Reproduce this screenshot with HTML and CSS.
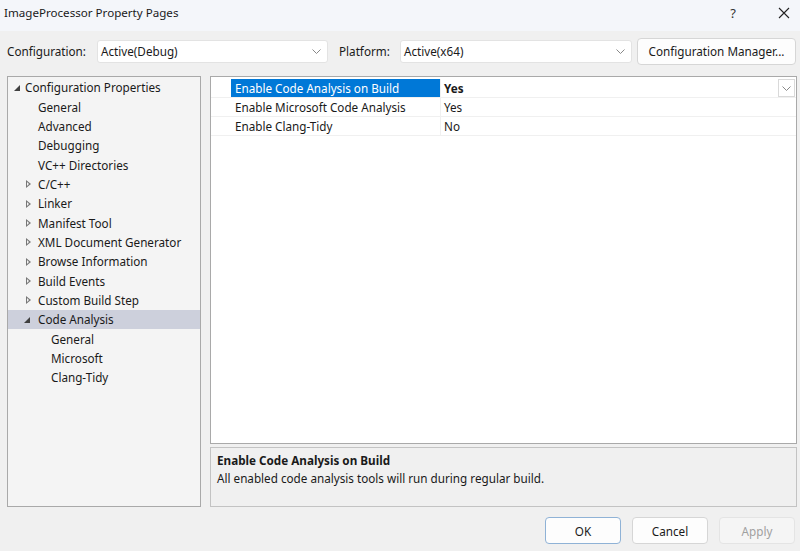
FILE: index.html
```html
<!DOCTYPE html>
<html>
<head>
<meta charset="utf-8">
<link rel="stylesheet" href="styles.css">
</head>
<body>
<div class="window">
  <div class="titlebar">
    <span class="title">ImageProcessor Property Pages</span>
    <div class="tb-controls">
      <span class="tb-help">?</span>
      <svg class="tb-close" width="12" height="12" viewBox="0 0 12 12"><path d="M1 1L11 11M11 1L1 11" stroke="#222" stroke-width="1.1" fill="none"/></svg>
    </div>
  </div>
  <div class="configrow">
    <span class="lbl lbl-config">Configuration:</span>
    <div class="combo combo-config"><span>Active(Debug)</span><svg class="chev" width="9" height="5" viewBox="0 0 9 5"><path d="M0.5 0.5L4.5 4.5L8.5 0.5" stroke="#888" fill="none"/></svg></div>
    <span class="lbl lbl-platform">Platform:</span>
    <div class="combo combo-platform"><span>Active(x64)</span><svg class="chev" width="9" height="5" viewBox="0 0 9 5"><path d="M0.5 0.5L4.5 4.5L8.5 0.5" stroke="#888" fill="none"/></svg></div>
    <div class="btn btn-cfgmgr">Configuration Manager...</div>
  </div>
  <div class="main">
    <div class="tree">
      <div class="node l0"><span class="tri open"></span>Configuration Properties</div>
      <div class="node l1"><span class="tri none"></span>General</div>
      <div class="node l1"><span class="tri none"></span>Advanced</div>
      <div class="node l1"><span class="tri none"></span>Debugging</div>
      <div class="node l1"><span class="tri none"></span>VC++ Directories</div>
      <div class="node l1"><span class="tri closed"></span>C/C++</div>
      <div class="node l1"><span class="tri closed"></span>Linker</div>
      <div class="node l1"><span class="tri closed"></span>Manifest Tool</div>
      <div class="node l1"><span class="tri closed"></span>XML Document Generator</div>
      <div class="node l1"><span class="tri closed"></span>Browse Information</div>
      <div class="node l1"><span class="tri closed"></span>Build Events</div>
      <div class="node l1"><span class="tri closed"></span>Custom Build Step</div>
      <div class="node l1 sel"><span class="tri open"></span>Code Analysis</div>
      <div class="node l2"><span class="tri none"></span>General</div>
      <div class="node l2"><span class="tri none"></span>Microsoft</div>
      <div class="node l2"><span class="tri none"></span>Clang-Tidy</div>
    </div>
    <div class="rightcol">
      <div class="grid">
        <div class="row selrow">
          <div class="gutter"></div>
          <div class="name">Enable Code Analysis on Build</div>
          <div class="value bold">Yes</div>
          <div class="ddbtn"><svg width="9" height="5" viewBox="0 0 9 5"><path d="M0.5 0.5L4.5 4.5L8.5 0.5" stroke="#888" fill="none"/></svg></div>
        </div>
        <div class="row">
          <div class="gutter"></div>
          <div class="name">Enable Microsoft Code Analysis</div>
          <div class="value">Yes</div>
        </div>
        <div class="row">
          <div class="gutter"></div>
          <div class="name">Enable Clang-Tidy</div>
          <div class="value">No</div>
        </div>
      </div>
      <div class="desc">
        <div class="desc-title">Enable Code Analysis on Build</div>
        <div class="desc-text">All enabled code analysis tools will run during regular build.</div>
      </div>
    </div>
  </div>
  <div class="footer">
    <div class="btn fbtn ok">OK</div>
    <div class="btn fbtn">Cancel</div>
    <div class="btn fbtn disabled">Apply</div>
  </div>
</div>
</body>
</html>
```
FILE: styles.css
```css
* { box-sizing: border-box; }
html, body { margin: 0; padding: 0; }
body {
  width: 800px; height: 551px; overflow: hidden;
  background: #f0f0f0;
  font-family: "Noto Sans", "Open Sans", sans-serif;
  font-size: 11.7px;
  color: #1a1a1a;
}
.window { width: 800px; height: 551px; display: flex; flex-direction: column; }
.titlebar {
  height: 31px; background: #f4f6fa;
  display: flex; align-items: center; justify-content: space-between;
  padding: 0 0 0 4px;
}
.title { font-size: 11.6px; color: #1a1a1a; margin-top: -6px; }
.tb-controls { display: flex; align-items: center; margin-top: -6px; }
.tb-help { width: 14px; text-align: center; margin-right: 38px; font-size: 13px; color: #333; }
.tb-close { margin-right: 10px; }
.configrow {
  height: 28px; margin-top: 6px;
  display: flex; align-items: center;
  padding-left: 7px;
}
.lbl { color: #1a1a1a; }
.lbl-config { width: 90px; }
.combo {
  height: 23px; background: #fff; border: 1px solid #e3e3e3; border-radius: 3px;
  display: flex; align-items: center; justify-content: space-between;
  padding: 0 6px 0 3px;
}
.combo-config { width: 231px; }
.lbl-platform { margin-left: 11px; width: 61px; }
.combo-platform { width: 232px; }
.chev { display: block; }
.btn {
  background: #fdfdfd; border: 1px solid #d6d6d6; border-radius: 4px;
  display: flex; align-items: center; justify-content: center;
}
.btn-cfgmgr { margin-left: 5px; width: 159px; height: 27px; }
.main {
  display: flex; margin-top: 11px; height: 431px; padding-left: 7px;
}
.tree {
  width: 194px; height: 431px;
  background: #f4f4f4; border: 1px solid #a9a9a9;
  padding-top: 1px;
}
.node { height: 19.35px; line-height: 19px; display: flex; align-items: center; white-space: nowrap; }
.node.sel { background: #cdd0dc; }
.tri { width: 8px; height: 8px; margin-right: 7px; flex: none; }
.l0 { padding-left: 6px; }
.l1 { padding-left: 16px; }
.l2 { padding-left: 29px; }
.l1 .tri.none, .l2 .tri.none { width: 6px; margin-right: 8px; }
.tri.open {
  width: 0; height: 0; margin-right: 5px;
  border-left: 6px solid transparent; border-bottom: 6px solid #404040;
  margin-left: 0;
}
.l1 .tri.open { margin-right: 8px; }
.tri.closed {
  width: 0; height: 0; position: relative;
  border-top: 4px solid transparent; border-bottom: 4px solid transparent;
  border-left: 5px solid #777; margin-right: 7px; margin-left: 2px;
}
.tri.closed::after {
  content: ""; position: absolute; left: -4px; top: -2px;
  border-top: 2px solid transparent; border-bottom: 2px solid transparent;
  border-left: 2.5px solid #f4f4f4;
}
.rightcol { margin-left: 9px; width: 587px; display: flex; flex-direction: column; }
.grid {
  height: 369px; background: #fff; border: 1px solid #a9a9a9;
  padding-top: 2px;
}
.row { display: flex; height: 19px; border-bottom: 1px solid #f0f0f0; position: relative; }
.gutter { width: 20px; flex: none; }
.name { width: 209px; flex: none; padding-left: 4px; line-height: 18px; white-space: nowrap; }
.value { flex: 1; padding-left: 3px; line-height: 18px; border-left: 1px solid #f0f0f0; }
.value.bold { font-weight: 700; }
.selrow .name { background: #0078d7; color: #fff; }
.ddbtn {
  position: absolute; right: 1px; top: 0; width: 17px; height: 18px;
  border: 1px solid #d9d9d9; background: #fff;
  display: flex; align-items: center; justify-content: center;
}
.desc {
  margin-top: 3px; height: 60px; background: #f0f0f0; border: 1px solid #c3c3c3;
  padding: 4px 6px;
}
.desc-title { font-weight: 700; line-height: 17px; }
.desc-text { line-height: 18px; }
.footer { display: flex; justify-content: flex-end; padding-right: 5px; margin-top: 10px; gap: 11px; }
.fbtn { width: 76px; height: 27px; }
.fbtn.ok { border-color: #8fb2d6; }
.fbtn.disabled { color: #a0a0a0; background: #f5f5f5; border-color: #e4e4e4; }
```
